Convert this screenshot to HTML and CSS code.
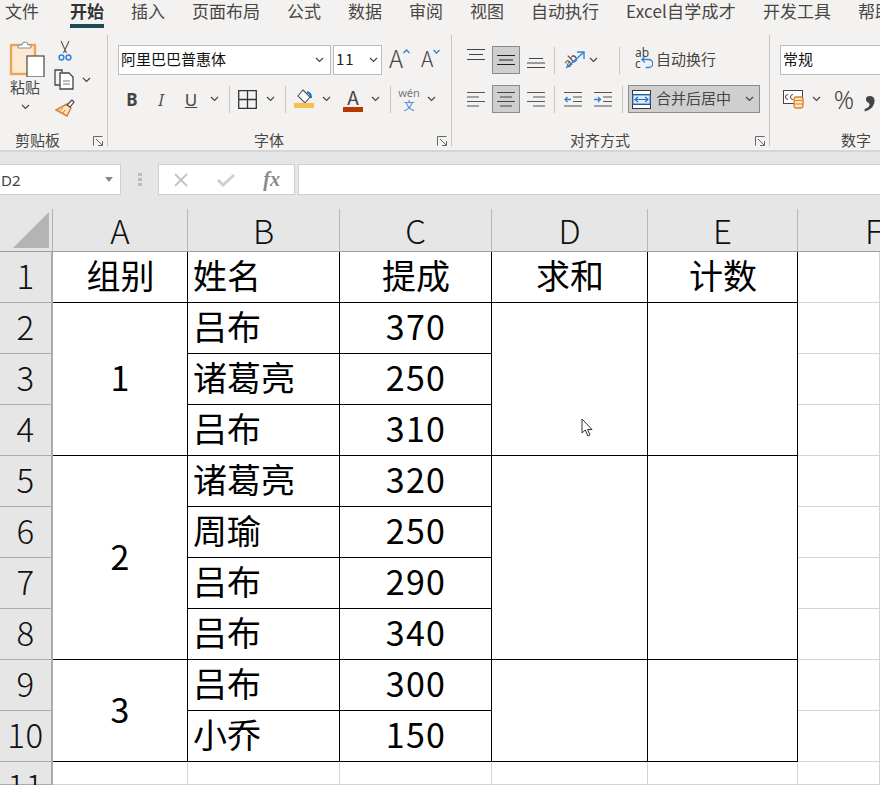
FILE: index.html
```html
<!DOCTYPE html>
<html lang="zh-CN">
<head>
<meta charset="utf-8">
<title>Excel</title>
<link rel="stylesheet" href="styles.css">
</head>
<body>
<svg class="defs" width="0" height="0"><defs>
<symbol id="chev" viewBox="0 0 9 6"><path d="M1 1l3.5 3.5L8 1" fill="none" stroke="#444" stroke-width="1.2"/></symbol>
<symbol id="launch" viewBox="0 0 10 10"><path d="M.5 9.5V.5h9M3 3l6 6M9.5 5v4.5H5" fill="none" stroke="#666" stroke-width="1"/></symbol>
</defs></svg>
<div class="app">
  <nav class="tabs">
    <span class="tab first">文件</span><span class="tab active">开始</span><span class="tab">插入</span><span class="tab">页面布局</span><span class="tab">公式</span><span class="tab">数据</span><span class="tab">审阅</span><span class="tab">视图</span><span class="tab">自动执行</span><span class="tab tab-x">Excel自学成才</span><span class="tab">开发工具</span><span class="tab">帮助</span>
  </nav>
  <section class="ribbon">
    <div class="group g-clip">
      <div class="body clip-body">
        <div class="paste">
          <svg width="36" height="37" viewBox="0 0 36 37"><rect x="2" y="5" width="24" height="29" fill="#fbe9d2" stroke="#e9a755" stroke-width="2.4"/><path d="M9 8V5h4a3 3 0 0 1 6 0h3v3z" fill="#fff" stroke="#8a8a8a"/><rect x="18" y="16" width="17" height="21" fill="#fff" stroke="#555" stroke-width="1.3"/></svg>
          <span class="paste-label">粘贴</span>
          <svg class="chev" width="9" height="6"><use href="#chev"/></svg>
        </div>
        <div class="clip-side">
          <svg class="scissors" width="14" height="21" viewBox="0 0 14 21"><path d="M3 1l5.500 12M11 1L5.500 13" stroke="#555" fill="none" stroke-width="1.1"/><circle cx="3.500" cy="17.500" r="2.400" fill="none" stroke="#2f83d6" stroke-width="1.500"/><circle cx="10.500" cy="17.500" r="2.400" fill="none" stroke="#2f83d6" stroke-width="1.500"/></svg>
          <div class="copy-line">
            <svg width="21" height="21" viewBox="0 0 21 21"><path d="M8 3V1H1v15h5" fill="none" stroke="#444" stroke-width="1.3"/><path d="M6 4h9l4 4v12H6z" fill="#fff" stroke="#444" stroke-width="1.3"/><path d="M9 12h7M9 15h7" stroke="#777"/></svg>
            <svg class="chev" width="9" height="6"><use href="#chev"/></svg>
          </div>
          <svg class="brush" width="21" height="20" viewBox="0 0 21 20"><path d="M13 5l4 4-4 8-11-6z" fill="#fbe3c3" stroke="#d9822b" stroke-width="1.5"/><path d="M6 12l3-3M9 14l2-3" stroke="#d9822b"/><path d="M13 6l5-5 2 2-4 5z" fill="#fff" stroke="#444" stroke-width="1.2"/></svg>
        </div>
      </div>
      <footer class="label-row"><span class="label label-clip">剪贴板</span><svg class="launch" width="10" height="10"><use href="#launch"/></svg></footer>
    </div>

    <div class="group g-font">
      <div class="body">
        <div class="row">
          <div class="select sel-font"><span class="up2">阿里巴巴普惠体</span><svg class="chev" width="9" height="6"><use href="#chev"/></svg></div>
          <div class="select sel-size"><span class="size-val up2">11</span><svg class="chev" width="9" height="6"><use href="#chev"/></svg></div>
          <span class="grow-a">A<svg class="caret" width="7" height="5" viewBox="0 0 7 5"><path d="M.5 4l3-3 3 3" fill="none" stroke="#2f83d6" stroke-width="1.3"/></svg></span>
          <span class="shrink-a">A<svg class="caret" width="7" height="5" viewBox="0 0 7 5"><path d="M.5 1l3 3 3-3" fill="none" stroke="#2f83d6" stroke-width="1.3"/></svg></span>
        </div>
        <div class="row row2">
          <span class="slot w28 t-b">B</span>
          <span class="slot w30 t-i">I</span>
          <span class="slot w30 t-u">U</span>
          <span class="slot w16"><svg class="chev" width="9" height="6"><use href="#chev"/></svg></span>
          <span class="slot w14"><i class="sep"></i></span>
          <span class="slot w23"><svg width="19" height="19" viewBox="0 0 19 19"><path d="M.7.7h17.6v17.6H.7zM9.5 1v17M1 9.5h17" fill="none" stroke="#333" stroke-width="1.3"/></svg></span>
          <span class="slot w22"><svg class="chev" width="9" height="6"><use href="#chev"/></svg></span>
          <span class="slot w8"><i class="sep"></i></span>
          <span class="slot w30">
            <svg width="20" height="20" viewBox="0 0 20 20"><path d="M9 1l7 7-5 6-7-7z" fill="#fff" stroke="#555" stroke-width="1.1"/><path d="M13 3q4 1 4 6" fill="none" stroke="#1f6fc0" stroke-width="2.2"/><rect y="14" width="20" height="5" fill="#f5bf4f"/></svg>
          </span>
          <span class="slot w14"><svg class="chev" width="9" height="6"><use href="#chev"/></svg></span>
          <span class="slot w30 ml5 color-a"><span class="a-letter">A</span><i class="a-bar"></i></span>
          <span class="slot w14"><svg class="chev" width="9" height="6"><use href="#chev"/></svg></span>
          <span class="slot w16"><i class="sep"></i></span>
          <span class="slot w22 wen"><span class="wen-top">wén</span><span class="wen-bot">文</span></span>
          <span class="slot w14 ml4"><svg class="chev" width="9" height="6"><use href="#chev"/></svg></span>
        </div>
      </div>
      <footer class="label-row"><span class="label label-font">字体</span><svg class="launch" width="10" height="10"><use href="#launch"/></svg></footer>
    </div>

    <div class="group g-align">
      <div class="body">
        <div class="row">
          <span class="slot w18"><svg class="al-top" width="18" height="12" viewBox="0 0 18 12"><path d="M0 .5h18M2 5.500h14M0 10.500h18" stroke="#444" fill="none"/></svg></span>
          <span class="slot btn ml7"><svg width="18" height="12" viewBox="0 0 18 12"><path d="M0 1.500h18M2 6h14M0 10.500h18" stroke="#222" stroke-width="1.200"/></svg></span>
          <span class="slot w18 ml7"><svg class="al-bot" width="18" height="12" viewBox="0 0 18 12"><path d="M2 1.500h14M0 6h18M0 10.500h18" stroke="#444"/></svg></span>
          <span class="slot w18"><i class="sep"></i></span>
          <span class="slot w22 orient"><span class="ab-rot">ab</span><svg class="orient-arrow" width="20" height="20" viewBox="0 0 20 20"><path d="M1 18L18 3M12 2h7v7" fill="none" stroke="#2f83d6" stroke-width="1.4"/></svg></span>
          <span class="slot w14 ml1"><svg class="chev" width="9" height="6"><use href="#chev"/></svg></span>
          <span class="slot w30 ml4"><i class="sep"></i></span>
          <span class="wrap-ico"><span class="wrap-ab">ab</span><span class="wrap-c">c</span><svg class="wrap-arrow" width="12" height="13" viewBox="0 0 12 13"><path d="M4 12h3a4 4 0 0 0 0-8H0M3 1L0 4l3 3" transform="translate(.8 -.5)" fill="none" stroke="#2f83d6" stroke-width="1.300"/></svg></span>
          <span class="wrap-txt">自动换行</span>
        </div>
        <div class="row row2">
          <span class="slot w18"><svg width="18" height="17" viewBox="0 0 18 17"><path d="M0 1.500h18M0 6h12M0 10.500h18M0 15h12" stroke="#555" fill="none"/></svg></span>
          <span class="slot btn ml7"><svg width="18" height="17" viewBox="0 0 18 17"><path d="M0 1.500h18M3 6h12M0 10.500h18M3 15h12" stroke="#444" fill="none" stroke-width="1.200"/></svg></span>
          <span class="slot w18 ml7"><svg width="18" height="17" viewBox="0 0 18 17"><path d="M0 1.500h18M6 6h12M0 10.500h18M6 15h12" stroke="#555" fill="none"/></svg></span>
          <span class="slot w18"><i class="sep"></i></span>
          <span class="slot w18 ml1"><svg width="18" height="17" viewBox="0 0 18 17"><path d="M0 1.500h18M9 6h9M9 10.500h9M0 15h18" stroke="#555" fill="none"/><path d="M7 8.500H1M3.500 6L1 8.500 3.500 11" stroke="#2f83d6" stroke-width="1.300" fill="none"/></svg></span>
          <span class="slot w18 ml12"><svg width="18" height="17" viewBox="0 0 18 17"><path d="M0 1.500h18M9 6h9M9 10.500h9M0 15h18" stroke="#555" fill="none"/><path d="M0 8.500h6M4 6l2.500 2.500L4 11" stroke="#2f83d6" stroke-width="1.300" fill="none"/></svg></span>
          <span class="slot w20"><i class="sep"></i></span>
          <span class="merge">
            <svg width="19" height="19" viewBox="0 0 19 19"><rect x=".5" y=".5" width="18" height="18" fill="#fff" stroke="#333"/><path d="M0 4.500h19M0 14.500h19" stroke="#333"/><rect x="1" y="5" width="17" height="9" fill="#dcebf8" stroke="#2f83d6"/><path d="M3 9.500h13M6 7L3 9.500 6 12M13 7l3 2.500L13 12" fill="none" stroke="#1f6fc0" stroke-width="1.100"/></svg>
            <span class="merge-txt up2">合并后居中</span>
            <svg class="chev" width="9" height="6"><use href="#chev"/></svg>
          </span>
        </div>
      </div>
      <footer class="label-row"><span class="label label-align">对齐方式</span><svg class="launch" width="10" height="10"><use href="#launch"/></svg></footer>
    </div>

    <div class="group g-num">
      <div class="body">
        <div class="row"><div class="select sel-num"><span class="up2">常规</span></div></div>
        <div class="row row2">
          <span class="slot w24 ml1"><svg width="21" height="20" viewBox="0 0 21 20"><rect x=".5" y="1.500" width="19" height="13" fill="#fff" stroke="#444"/><path d="M5 5.500a2.500 2.500 0 1 0 0 5M10 5.500a2.500 2.500 0 1 0 0 5" fill="none" stroke="#444"/><rect x="11" y="8" width="9" height="11" rx="2.500" fill="#fbe3c3" stroke="#d9822b" stroke-width="1.300"/><path d="M11 11.500h9M11 15h9" stroke="#d9822b"/></svg></span>
          <span class="slot w14 ml4"><svg class="chev" width="9" height="6"><use href="#chev"/></svg></span>
          <span class="slot w30 ml6 pct">%</span>
          <span class="comma">,</span>
        </div>
      </div>
      <footer class="label-row"><span class="label label-num">数字</span></footer>
    </div>
  </section>

  <section class="fbar">
    <div class="namebox"><span>D2</span><i class="tri"></i></div>
    <div class="dots"><i></i><i></i><i></i></div>
    <div class="fbtns">
      <svg width="16" height="16" viewBox="0 0 16 16"><path d="M2 2l12 12M14 2L2 14" stroke="#c4c4c4" stroke-width="1.800"/></svg>
      <svg width="18" height="14" viewBox="0 0 18 14"><path d="M1 7l5 5L17 2" fill="none" stroke="#cfcfcf" stroke-width="3"/></svg>
      <span class="fx">fx</span>
    </div>
    <div class="finput"></div>
  </section>

  <section class="sheet">
    <div class="corner"><svg width="36" height="36" viewBox="0 0 36 36"><path d="M36 0v36H0z" fill="#b4b4b4"/></svg></div>
    <div class="ch">A</div><div class="ch">B</div><div class="ch">C</div><div class="ch">D</div><div class="ch">E</div><div class="ch ch-f">F</div>

    <div class="rh">1</div><div class="c ctr">组别</div><div class="c">姓名</div><div class="c ctr">提成</div><div class="c ctr">求和</div><div class="c ctr">计数</div><div class="c-f"></div>

    <div class="rh">2</div><div class="c ctr n m3">1</div><div class="c">吕布</div><div class="c ctr n">370</div><div class="c m3"></div><div class="c m3"></div><div class="c-f"></div>
    <div class="rh">3</div><div class="c">诸葛亮</div><div class="c ctr n">250</div><div class="c-f"></div>
    <div class="rh">4</div><div class="c">吕布</div><div class="c ctr n">310</div><div class="c-f"></div>

    <div class="rh">5</div><div class="c ctr n m4">2</div><div class="c">诸葛亮</div><div class="c ctr n">320</div><div class="c m4"></div><div class="c m4"></div><div class="c-f"></div>
    <div class="rh">6</div><div class="c">周瑜</div><div class="c ctr n">250</div><div class="c-f"></div>
    <div class="rh">7</div><div class="c">吕布</div><div class="c ctr n">290</div><div class="c-f"></div>
    <div class="rh">8</div><div class="c">吕布</div><div class="c ctr n">340</div><div class="c-f"></div>

    <div class="rh">9</div><div class="c ctr n m2">3</div><div class="c">吕布</div><div class="c ctr n">300</div><div class="c m2"></div><div class="c m2"></div><div class="c-f"></div>
    <div class="rh">10</div><div class="c">小乔</div><div class="c ctr n">150</div><div class="c-f"></div>

    <div class="rh">11</div><div class="c-f"></div><div class="c-f"></div><div class="c-f"></div><div class="c-f"></div><div class="c-f"></div><div class="c-f"></div>

    <svg class="cursor" width="14" height="19" viewBox="0 0 14 19"><path d="M1 1v14l3.300-3 2.500 6 2.200-1-2.500-5.500H11z" fill="#fff" stroke="#333" stroke-width="1"/></svg>
  </section>
</div>
</body>
</html>
```
FILE: styles.css
```css
* { box-sizing: border-box; }
html, body { margin: 0; padding: 0; }
body { font-family: "Noto Sans CJK SC", "Noto Sans", sans-serif; background: #fff; overflow: hidden; }
.defs { position: absolute; }
.app { width: 880px; height: 785px; overflow: hidden; display: flex; flex-direction: column; }
.up2 { margin-bottom: 4px; }

/* tabs */
.tabs { height: 32px; background: #f3f2f1; display: flex; gap: 27px; padding-left: 5px; white-space: nowrap; overflow: hidden; flex: none; }
.tab { font-size: 17px; line-height: 21px; color: #484644; height: 28px; }
.tab.first { margin-right: 4px; }
.tab.active { font-weight: 700; color: #333; border-bottom: 4px solid #1c4a55; }
.tab-x { letter-spacing: .2px; }

/* ribbon */
.ribbon { height: 120px; background: #f3f2f1; display: flex; flex: none; padding-top: 3px; border-bottom: 2px solid #d6d6d6; overflow: hidden; }
.group { height: 111px; border-right: 1px solid #c8c6c4; display: flex; flex-direction: column; flex: none; }
.g-clip { width: 108px; }
.g-font { width: 344px; padding-left: 10px; }
.g-align { width: 318px; padding-left: 15px; }
.g-num { flex: 1; padding-left: 10px; border-right: 0; }
.body { flex: 1; padding-top: 10px; min-height: 0; }
.label-row { height: 22px; display: flex; align-items: flex-start; padding-top: 5px; position: relative; }
.label { font-size: 15px; color: #484644; line-height: 22px; white-space: nowrap; }
.label-clip { margin-left: 15px; }
.label-font { margin-left: 136px; }
.label-align { margin-left: 103px; }
.label-num { margin-left: 61px; }
.launch { position: absolute; right: 4px; top: 12px; }

/* clipboard */
.clip-body { display: flex; padding-left: 9px; padding-top: 5px; }
.paste { width: 32px; display: flex; flex-direction: column; align-items: center; }
.paste svg:first-child { margin-left: 3px; flex: none; }
.paste-label { font-size: 15px; line-height: 20px; color: #484644; white-space: nowrap; }
.paste .chev { margin-top: 7px; }
.clip-side { margin-left: 13px; display: flex; flex-direction: column; gap: 8px; }
.scissors { margin-left: 4px; }
.brush { margin-top: 1px; }
.copy-line { display: flex; align-items: center; gap: 7px; }

/* rows */
.row { display: flex; align-items: center; height: 30px; }
.row2 { margin-top: 9px; height: 30px; }
.slot { display: flex; align-items: center; justify-content: center; height: 30px; flex: none; }
.w8 { width: 8px; } .w14 { width: 14px; } .w16 { width: 16px; } .w18 { width: 18px; } .w20 { width: 20px; }
.w22 { width: 22px; } .w23 { width: 23px; } .w24 { width: 24px; } .w28 { width: 28px; } .w30 { width: 30px; }
.ml1 { margin-left: 1px; } .ml4 { margin-left: 4px; } .ml5 { margin-left: 5px; } .ml6 { margin-left: 6px; } .ml7 { margin-left: 7px; } .ml12 { margin-left: 12px; }
.sep { display: block; width: 1px; height: 27px; background: #c8c6c4; }

/* selects */
.select { background: #fff; border: 1px solid #bdbdbd; height: 30px; display: flex; align-items: center; font-size: 15px; color: #111; padding-left: 2px; position: relative; }
.sel-font { width: 213px; justify-content: space-between; padding-right: 6px; }
.sel-size { width: 49px; margin-left: 2px; justify-content: space-between; padding-right: 3px; }
.sel-num { width: 120px; }
.size-val { color: #222; letter-spacing: 1px; }
.grow-a { font-size: 24px; font-weight: 300; color: #444; margin-left: 7px; width: 32px; line-height: 26px; height: 30px; display: flex; align-items: flex-start; }
.shrink-a { font-size: 21px; font-weight: 300; color: #444; width: 28px; line-height: 26px; height: 30px; display: flex; align-items: flex-start; }
.caret { margin-top: 4px; }
.t-b { font: 700 17px "Noto Sans", sans-serif; color: #444; }
.t-i { font: italic 400 17px "Noto Sans", sans-serif; color: #555; }
.t-u { font: 400 17px "Noto Sans", sans-serif; color: #444; text-decoration: underline; }
.color-a { flex-direction: column; }
.a-letter { font-size: 19px; line-height: 20px; color: #444; }
.a-bar { display: block; width: 20px; height: 5px; background: #b33a00; }
.wen { flex-direction: column; }
.wen-top { font: 11px/12px "Noto Sans", sans-serif; color: #777; }
.wen-bot { font-size: 11px; line-height: 12px; color: #2f83d6; }

/* alignment */
.btn { width: 28px; height: 28px; background: #cfcfcf; border: 1px solid #8a8a8a; }
.al-top { margin-bottom: 10px; }
.al-bot { margin-top: 6px; }
.orient { position: relative; }
.ab-rot { font-size: 12px; color: #444; transform: rotate(-42deg) translate(-3px, -3px); line-height: 1; display: block; }
.orient-arrow { position: absolute; left: 2px; top: 5px; }
.wrap-ico { position: relative; width: 18px; height: 26px; flex: none; }
.wrap-ab { position: absolute; left: 1px; top: 0; font: 12px/12px "Noto Sans", sans-serif; color: #444; }
.wrap-c { position: absolute; left: 1px; top: 11px; font: 12px/12px "Noto Sans", sans-serif; color: #444; }
.wrap-arrow { position: absolute; left: 7px; top: 9px; }
.wrap-txt { font-size: 15px; color: #484644; margin-left: 4px; white-space: nowrap; margin-bottom: 4px; }
.merge { width: 132px; height: 28px; background: #cfcfcf; border: 1px solid #8a8a8a; display: flex; align-items: center; padding-left: 3px; margin-left: -4px; flex: none; }
.merge-txt { font-size: 15px; color: #484644; margin-left: 5px; white-space: nowrap; }
.merge .chev { margin-left: 14px; }

/* number */
.pct { font: 300 25px "Noto Sans", sans-serif; color: #444; }
.comma { font: 700 50px/30px "Liberation Serif", serif; color: #444; margin-left: 5px; margin-bottom: 26px; }

/* formula bar */
.fbar { height: 57px; background: #e6e6e6; display: flex; padding-top: 12px; flex: none; }
.namebox { width: 121px; height: 31px; background: #fff; border: 1px solid #cfcfcf; border-left: 0; display: flex; align-items: center; justify-content: space-between; padding: 0 7px 0 1px; font: 15px "Noto Sans", sans-serif; color: #444; }
.tri { border: 4px solid transparent; border-top: 5px solid #888; border-bottom: 0; width: 0; height: 0; display: block; }
.dots { width: 37px; height: 31px; display: flex; flex-direction: column; align-items: center; justify-content: center; gap: 2px; }
.dots i { display: block; width: 4px; height: 3px; background: #bcbcbc; }
.fbtns { width: 137px; height: 31px; background: #fff; border: 1px solid #cfcfcf; display: flex; align-items: center; justify-content: space-between; padding: 0 14px 0 14px; }
.fx { font: italic 700 20px "Liberation Serif", serif; color: #888; }
.finput { flex: 1; height: 31px; margin-left: 3px; background: #fff; border: 1px solid #cfcfcf; border-right: 0; }

/* sheet */
.sheet { flex: 1; position: relative; display: grid; grid-template-columns: 53px 135px 152px 152px 156px 150px 82px; grid-template-rows: 43px repeat(10, 51px) 23px; background: #fff; overflow: hidden; }
.corner { background: #e6e6e6; border-right: 1px solid #b0b0b0; border-bottom: 1px solid #9e9e9e; padding: 3px 0 0 13px; }
.corner svg { display: block; }
.ch { background: #e6e6e6; border-right: 1px solid #b8b8b8; border-bottom: 1px solid #9e9e9e; font-size: 33px; font-weight: 300; line-height: 43px; text-align: center; color: #111; }
.ch-f { text-align: left; padding-left: 67px; border-right: 0; }
.rh { background: #e6e6e6; border-right: 2px solid #ababab; border-bottom: 1px solid #ababab; font-size: 33px; font-weight: 300; line-height: 47px; letter-spacing: .5px; text-align: center; color: #111; }
.c { border-right: 1px solid #000; border-bottom: 1px solid #000; font-size: 34px; line-height: 46px; padding: 0 0 4px 5px; color: #000; white-space: nowrap; display: flex; align-items: center; }
.ctr { justify-content: center; padding-left: 1px; }
.n { letter-spacing: 1.3px; }
.c-f { border-right: 1px solid #d4d4d4; border-bottom: 1px solid #d4d4d4; }
.m2 { grid-row: span 2; }
.m3 { grid-row: span 3; }
.m4 { grid-row: span 4; }
.cursor { position: absolute; left: 581px; top: 209px; }
```
